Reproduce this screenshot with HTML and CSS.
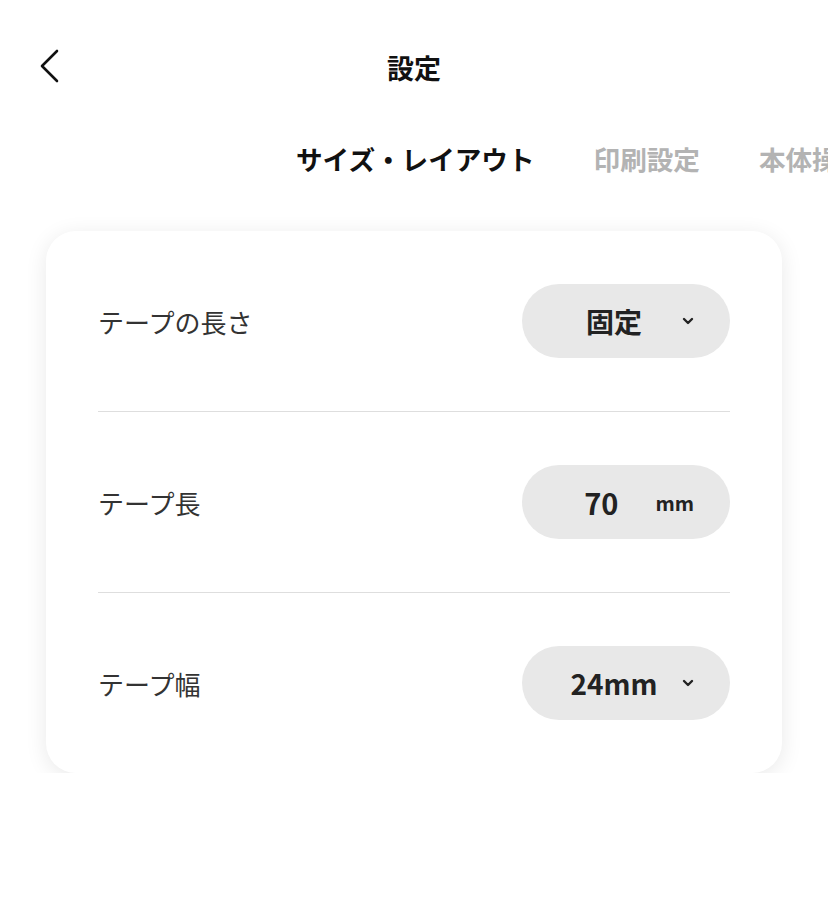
FILE: index.html
```html
<!DOCTYPE html>
<html lang="ja">
<head>
    <meta charset="UTF-8">
    <title>設定</title>
    <link rel="stylesheet" href="styles.css">
</head>
<body>
    <div id="header">
        <button class="back-button" aria-label="戻る">
            <svg width="22" height="34" viewBox="0 0 22 34">
                <path d="M19 2 L4 17 L19 32" fill="none" stroke="#111" stroke-width="2.6" stroke-linecap="round" stroke-linejoin="round"/>
            </svg>
        </button>
        <h1>設定</h1>
    </div>

    <div id="tabs">
        <span class="tab active">サイズ・レイアウト</span>
        <span class="tab">印刷設定</span>
        <span class="tab">本体操作</span>
    </div>

    <div id="settings-card">
        <div class="setting-row">
            <span class="setting-label">テープの長さ</span>
            <div class="pill">
                <span class="pill-value">固定</span>
                <span class="chevron">
                    <svg width="12" height="8" viewBox="0 0 12 8"><path d="M2 2 L6 6 L10 2" fill="none" stroke="#222" stroke-width="2.4" stroke-linecap="round" stroke-linejoin="round"/></svg>
                </span>
            </div>
        </div>
        <div class="setting-row">
            <span class="setting-label">テープ長</span>
            <div class="pill pill-input">
                <span class="pill-number">70</span>
                <span class="pill-unit">mm</span>
            </div>
        </div>
        <div class="setting-row">
            <span class="setting-label">テープ幅</span>
            <div class="pill">
                <span class="pill-value">24mm</span>
                <span class="chevron">
                    <svg width="12" height="8" viewBox="0 0 12 8"><path d="M2 2 L6 6 L10 2" fill="none" stroke="#222" stroke-width="2.4" stroke-linecap="round" stroke-linejoin="round"/></svg>
                </span>
            </div>
        </div>
    </div>
</body>
</html>
```

FILE: styles.css
```css
body {
    font-family: "Noto Sans CJK JP", "Noto Sans", sans-serif;
    margin: 0;
    padding: 0;
    background-color: #ffffff;
    color: #222;
    overflow: hidden;
}

#header {
    height: 134px;
    display: flex;
    align-items: center;
    justify-content: center;
    position: relative;
    box-sizing: border-box;
}

#header h1 {
    font-size: 27px;
    font-weight: bold;
    margin: 0;
    color: #111;
    line-height: 1;
}

/* ボタンはヘッダーの左に重ねる */
.back-button {
    position: absolute;
    left: 38px;
    top: 49px;
    background: none;
    border: none;
    padding: 0;
    cursor: pointer;
}

.back-button svg {
    display: block;
}

/* タブは横スクロール、選択中のタブが中央 */
#tabs {
    display: flex;
    gap: 59px;
    padding-left: 296px;
    white-space: nowrap;
    height: 50px;
    align-items: center;
    overflow: hidden;
}

.tab {
    font-size: 26.6px;
    font-weight: bold;
    color: #b3b3b3;
    line-height: 1;
    flex-shrink: 0;
}

.tab.active {
    color: #111;
}

#settings-card {
    margin: 47px 46px 0 46px;
    background-color: #fff;
    border-radius: 30px;
    box-shadow: 0 4px 22px rgba(0, 0, 0, 0.09);
    padding: 0 52px;
}

.setting-row {
    display: flex;
    align-items: center;
    justify-content: space-between;
    padding: 53px 0;
    border-bottom: 1px solid #dedede;
}

.setting-row:last-child {
    border-bottom: none;
}

.setting-label {
    font-size: 26px;
    color: #333;
}

.pill {
    width: 208px;
    height: 74px;
    border-radius: 37px;
    background-color: #e8e8e8;
    display: flex;
    align-items: center;
    box-sizing: border-box;
    padding-right: 36px;
}

.pill-value {
    flex: 1;
    text-align: center;
    font-size: 28px;
    font-weight: bold;
    color: #222;
    padding-left: 24px;
}

.chevron svg {
    display: block;
}

.pill-number {
    flex: 1;
    text-align: right;
    font-size: 29px;
    font-weight: bold;
    color: #222;
    padding-right: 37px;
}

.pill-unit {
    font-size: 20px;
    font-weight: bold;
    color: #222;
}
```
